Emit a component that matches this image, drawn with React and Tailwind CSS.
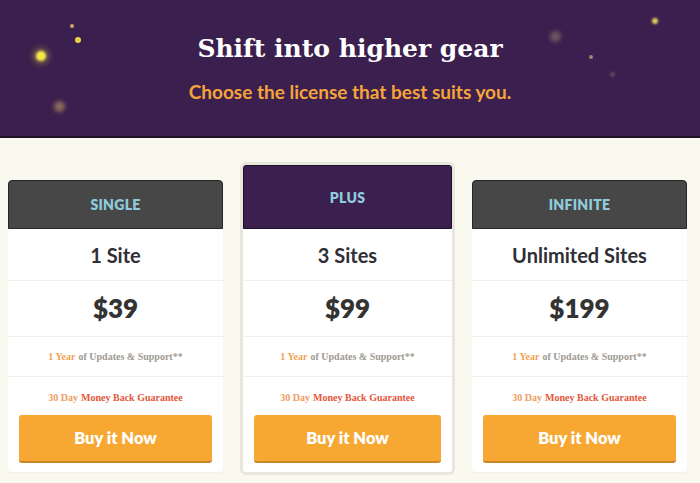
import React from 'react';

const plans = [
    { name: 'SINGLE', sites: '1 Site', price: '$39' },
    { name: 'PLUS', sites: '3 Sites', price: '$99', featured: true },
    { name: 'INFINITE', sites: 'Unlimited Sites', price: '$199' },
];

const sans = "font-['Lato','Open_Sans',sans-serif]";
const serif = "font-['Liberation_Serif','DejaVu_Serif',serif]";

const PlanCard = ({ plan }) => {
    const outer = plan.featured
        ? 'w-[215px] rounded-[6px] border-[3px] border-[#e9e7dc] bg-white'
        : 'mt-[18px] w-[215px] rounded-[4px] bg-white shadow-[0_1px_2px_rgba(0,0,0,0.04)]';
    const head = plan.featured
        ? 'h-[64px] bg-[#3b1f4e] border border-[#1f0f2a] rounded-t-[3px]'
        : 'h-[49px] bg-[#474747] border border-[#262626] rounded-t-[4px]';

    return (
        <div className={outer}>
            <div className={`${head} flex items-center justify-center`}>
                <span className={`${sans} text-[14px] font-extrabold tracking-[0.02em] text-[#8fcbdb]`}>
                    {plan.name}
                </span>
            </div>
            <div className={`h-[52px] border-b border-[#f1f0ea] flex items-center justify-center ${sans} text-[20px] font-bold text-[#2f2f35]`}>
                {plan.sites}
            </div>
            <div className={`h-[56px] border-b border-[#f1f0ea] flex items-center justify-center ${sans} text-[26px] font-extrabold text-[#333333]`}>
                {plan.price}
            </div>
            <div className={`h-[40px] border-b border-[#f1f0ea] flex items-center justify-center ${serif} text-[10px] font-bold`}>
                <span className="text-[#f1a257]">1 Year</span>
                <span className="ml-[3px] text-[#a09a92]">of Updates &amp; Support**</span>
            </div>
            <div className="px-[11px] pt-[12px] pb-[9px]">
                <div className={`h-[16px] flex items-center justify-center ${serif} text-[10px] font-bold`}>
                    <span className="text-[#f19a62]">30 Day</span>
                    <span className="ml-[3px] text-[#e5563c]">Money Back Guarantee</span>
                </div>
                <button className={`mt-[10px] w-full h-[48px] rounded-[3px] bg-[#f6a833] border-b-2 border-[#c9862a] ${sans} text-[16.5px] font-extrabold text-white`}>
                    Buy it Now
                </button>
            </div>
        </div>
    );
};

export default function App() {
    return (
        <div className="w-full h-[483px] overflow-hidden bg-[#faf9ef]">
            {/* Hero */}
            <div className="relative h-[138px] bg-[#3b1f4e] border-b-2 border-[#1e1128] flex flex-col items-center pt-[32px]">
                <span className="absolute left-[36px] top-[51px] w-[10px] h-[10px] rounded-full bg-[#f6ea4a] blur-[1px] shadow-[0_0_6px_2px_rgba(246,234,74,0.5)]" />
                <span className="absolute left-[70px] top-[24px] w-[4px] h-[4px] rounded-full bg-[#c8a86a] blur-[0.5px]" />
                <span className="absolute left-[75px] top-[37px] w-[6px] h-[6px] rounded-full bg-[#e8d44a] blur-[0.5px]" />
                <span className="absolute left-[54px] top-[101px] w-[11px] h-[11px] rounded-full bg-[#8a6a5a] blur-[2px]" />
                <span className="absolute left-[652px] top-[18px] w-[6px] h-[6px] rounded-full bg-[#e5d25a] blur-[1px]" />
                <span className="absolute left-[550px] top-[31px] w-[11px] h-[11px] rounded-full bg-[#6e5560] blur-[2px]" />
                <span className="absolute left-[589px] top-[55px] w-[4px] h-[4px] rounded-full bg-[#9c8a6a] blur-[0.5px]" />
                <span className="absolute left-[610px] top-[72px] w-[5px] h-[5px] rounded-full bg-[#5e4a5e] blur-[1px]" />
                <h1 className="font-['DejaVu_Serif',serif] text-[25px] leading-[34px] font-bold text-white">
                    Shift into higher gear
                </h1>
                <p className={`${sans} mt-[14px] text-[19px] leading-[24px] font-bold text-[#f5a43a]`}>
                    Choose the license that best suits you.
                </p>
            </div>

            {/* Plans */}
            <div className="flex items-start gap-[17px] pl-2 pt-[24px]">
                {plans.map((plan) => (
                    <PlanCard key={plan.name} plan={plan} />
                ))}
            </div>
        </div>
    );
}
